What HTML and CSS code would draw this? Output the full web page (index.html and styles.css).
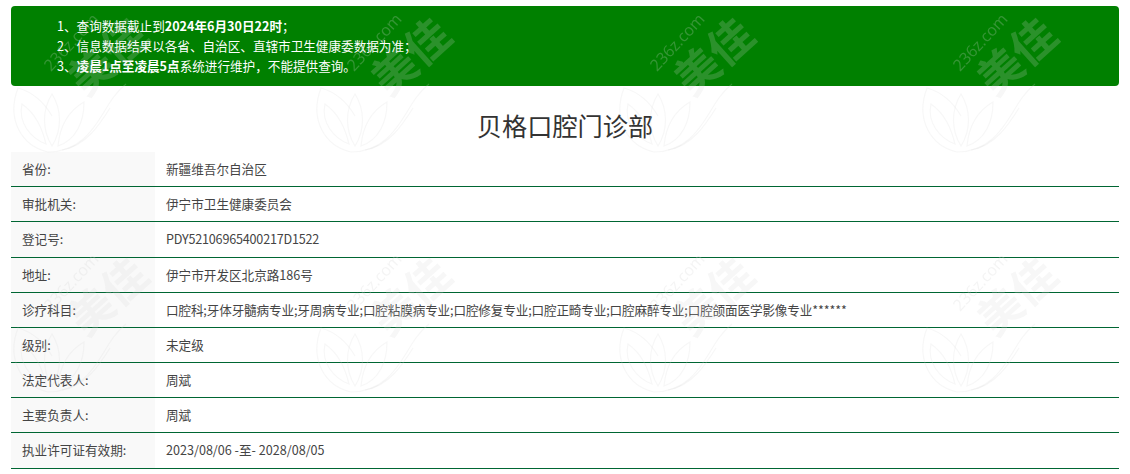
FILE: index.html
```html
<!DOCTYPE html>
<html lang="zh-CN">
<head>
<meta charset="utf-8">
<title>贝格口腔门诊部</title>
<link rel="stylesheet" href="styles.css">
</head>
<body>
<main class="page">
  <div class="notice">
    <p>1、查询数据截止到<b>2024年6月30日22时</b>；</p>
    <p>2、信息数据结果以各省、自治区、直辖市卫生健康委数据为准；</p>
    <p>3、<b>凌晨1点至凌晨5点</b>系统进行维护，不能提供查询。</p>
  </div>
  <h1 class="title">贝格口腔门诊部</h1>
  <div class="info">
    <div class="row"><div class="label">省份:</div><div class="value">新疆维吾尔自治区</div></div>
    <div class="row"><div class="label">审批机关:</div><div class="value">伊宁市卫生健康委员会</div></div>
    <div class="row"><div class="label">登记号:</div><div class="value value-code">PDY52106965400217D1522</div></div>
    <div class="row"><div class="label">地址:</div><div class="value">伊宁市开发区北京路186号</div></div>
    <div class="row"><div class="label">诊疗科目:</div><div class="value value-tight">口腔科;牙体牙髓病专业;牙周病专业;口腔粘膜病专业;口腔修复专业;口腔正畸专业;口腔麻醉专业;口腔颌面医学影像专业******</div></div>
    <div class="row"><div class="label">级别:</div><div class="value">未定级</div></div>
    <div class="row"><div class="label">法定代表人:</div><div class="value">周斌</div></div>
    <div class="row"><div class="label">主要负责人:</div><div class="value">周斌</div></div>
    <div class="row"><div class="label">执业许可证有效期:</div><div class="value">2023/08/06 -至- 2028/08/05</div></div>
  </div>
</main>
<svg class="watermark" aria-hidden="true">
  <defs>
    <pattern id="wm" x="0" y="0" width="303" height="240" patternUnits="userSpaceOnUse">
      <text class="wm-site" transform="translate(51 72) rotate(-47)">236z.com</text>
      <text class="wm-brand" transform="translate(86 98) rotate(-42)">美佳</text>
      <g class="wm-flower">
        <path d="M48 152C22 146 6 120 18 88C32 92 44 102 52 116"/>
        <path d="M22 104C18 122 30 138 46 144C42 128 36 114 22 104Z"/>
        <path d="M52 94C42 110 42 130 52 146C62 130 62 110 52 94Z"/>
        <path d="M58 146C76 140 84 122 84 102C70 110 60 124 58 146Z"/>
        <path d="M48 152C78 152 92 132 104 112C110 102 116 92 126 84"/>
        <path d="M62 150C86 146 100 124 110 108"/>
      </g>
    </pattern>
  </defs>
  <rect width="100%" height="100%" fill="url(#wm)"/>
</svg>
</body>
</html>
```
FILE: styles.css
```css
html, body {
  margin: 0;
  padding: 0;
  background: #fff;
  overflow: hidden;
}
body {
  font-family: "Noto Sans CJK SC", "Open Sans", sans-serif;
  font-size: 12.6px;
  color: #444;
}
.page {
  padding: 6px 11px 0;
}
.notice {
  box-sizing: border-box;
  height: 80px;
  padding: 10px 46px;
  background: #008000;
  border-radius: 4px;
  color: #fff;
  line-height: 20px;
}
.notice p {
  margin: 0;
}
.title {
  margin: 24px 0 12.17px;
  font-size: 25.2px;
  font-weight: 400;
  line-height: 30px;
  text-align: center;
  color: #333;
}
.row {
  display: flex;
  border-bottom: 1px solid #006633;
  line-height: 18.15px;
}
.label {
  flex: 0 0 144px;
  box-sizing: border-box;
  padding: 8px 11px;
  background: #f9f9f9;
}
.value {
  flex: 1;
  padding: 8px 11px;
}
.value-code {
  letter-spacing: -0.2px;
}
.value-tight {
  letter-spacing: -0.14px;
}
.watermark {
  position: fixed;
  inset: 0;
  width: 100%;
  height: 100%;
  pointer-events: none;
}
.wm-site {
  font-family: "Open Sans", sans-serif;
  font-size: 16px;
  fill: rgba(213, 213, 213, 0.25);
}
.wm-brand {
  font-family: "Noto Sans CJK SC", sans-serif;
  font-size: 44px;
  font-weight: 700;
  fill: rgba(213, 213, 213, 0.2);
}
.wm-flower path {
  fill: none;
  stroke: rgba(213, 213, 213, 0.2);
  stroke-width: 1.2;
}
```
